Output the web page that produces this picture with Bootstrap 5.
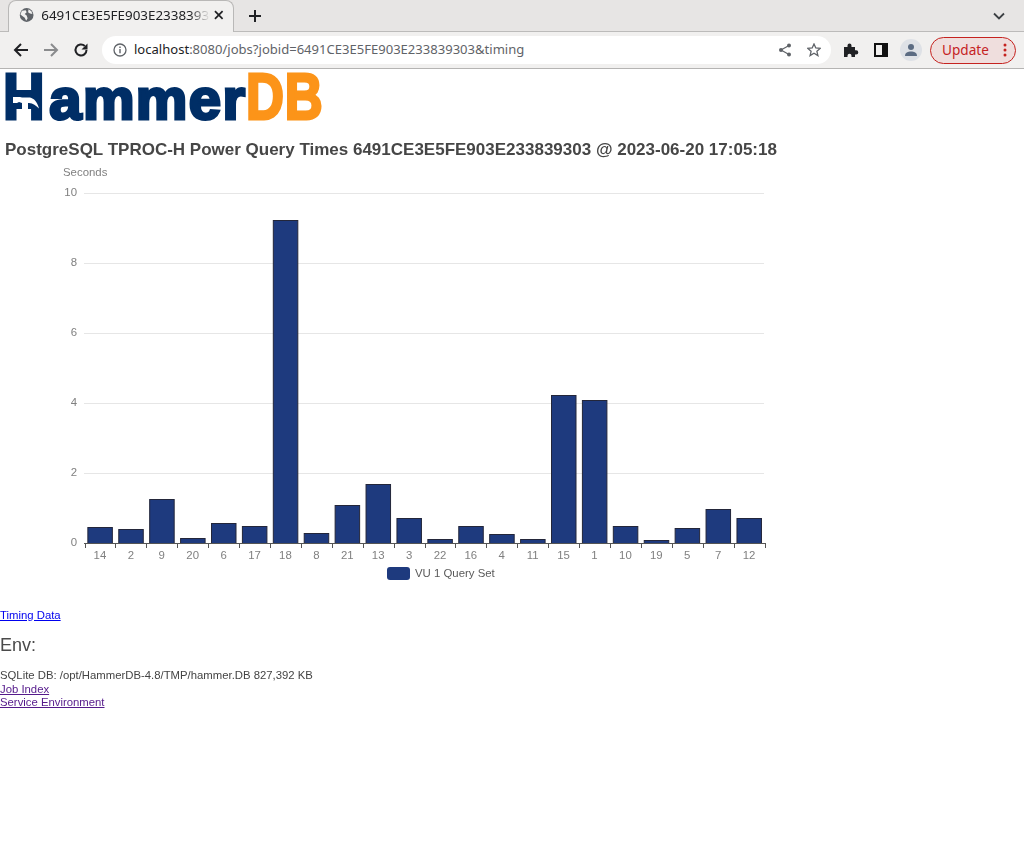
<!DOCTYPE html>
<html lang="en">
<head>
<meta charset="utf-8">
<title>HammerDB Timing</title>
<link href="https://cdn.jsdelivr.net/npm/bootstrap@5.3.0/dist/css/bootstrap.min.css" rel="stylesheet">
<style>
html,body{background:#fff;}
body{margin:0;font-family:"Liberation Sans",Arial,sans-serif;font-size:11.34px;line-height:13.4px;color:#444;height:861px;overflow:hidden;}
main{opacity:.995;}
.ui-font{font-family:"Noto Sans","Open Sans",sans-serif;}
.tabstrip{height:32px;background:#e7e5e4;border-bottom:1px solid #bcbbba;}
.tabcell{width:226px;height:32px;margin-left:8px;margin-bottom:-1px;background:#f1f0ef;border:1px solid #b9b8b7;border-bottom:0;border-radius:8px 8px 0 0;padding:0 9px 3px 10px;}
.tabtitle{font-size:13.4px;line-height:18px;color:#202124;width:177px;white-space:nowrap;overflow:hidden;margin-left:7px;-webkit-mask-image:linear-gradient(90deg,#000 88%,transparent);mask-image:linear-gradient(90deg,#000 88%,transparent);}
.toolbar{height:37px;background:#f1f0ef;border-bottom:1px solid #b5b4b3;}
.omnibox{width:729px;height:28px;background:#fff;border-radius:14px;margin-left:13px;padding:0 10px 0 11px;font-size:13.05px;color:#5f6368;white-space:nowrap;}
.omnibox b{font-weight:400;color:#202124;}
.avatar{width:22px;height:22px;border-radius:50%;background:#dee1e6;}
.updatebtn{width:86px;height:27px;border:1px solid #c5221f;border-radius:14px;background:#efdedd;color:#c5221f;font-size:13.6px;padding:0 8px 0 11px;}
.logo-wrap{height:56px;padding:4px 0 0 6px;}
.logo{display:flex;align-items:baseline;position:relative;width:316px;height:48px;font-weight:700;line-height:48px;}
.logo span{display:block;transform-origin:0 100%;white-space:nowrap;-webkit-text-stroke:3px currentColor;}
.lg-h{color:#002e66;font-size:64px;flex:0 0 39px;margin-left:-3px;transform:scaleX(.9);}
.lg-rest{color:#002e66;font-size:58px;flex:0 0 199px;letter-spacing:1.400px;}
.lg-db{color:#fc9419;font-size:64px;flex:0 0 77px;margin-left:-2px;transform:scaleX(.82);letter-spacing:1px;}
.logo svg{position:absolute;left:0;top:0;}
.page-title{font-size:17px;font-weight:700;color:#464646;margin:0 0 0 5px;line-height:21px;padding-top:14px;white-space:nowrap;}
.chart{display:block;width:770px;height:430px;}
.chart text{font-family:"Liberation Sans",Arial,sans-serif;font-size:11.4px;fill:#808080;}
.chart text.lgd{fill:#5a5a5a;}
.lnks{margin-top:19px;}
.lnks a{color:#00e;}
.lnks a.seen{color:#551a8b;}
.env-head{font-size:18px;font-weight:400;color:#4a4a4a;margin:13px 0 13px;line-height:21px;}
</style>
</head>
<body>
<div class="tabstrip d-flex align-items-end ui-font">
  <div class="tabcell d-flex align-items-center">
    <svg width="16" height="16" viewBox="0 0 16 16"><circle cx="8" cy="8" r="7.200" fill="#5f6368"/><path d="M3 3.500 7 3l1 2-2 2 2 1.500 1 3L7.500 14 6 11 3.500 9 1.500 7.500zM10 2l3 2 1 3-2.500-.5L9.500 5z" fill="#f1f0ef"/></svg>
    <div class="tabtitle">6491CE3E5FE903E233839303</div>
    <svg class="ms-1" width="10" height="10" viewBox="0 0 10 10"><path d="M1 1l8 8M9 1L1 9" stroke="#202124" stroke-width="1.800"/></svg>
  </div>
  <svg style="margin:0 0 9px 15px" width="12" height="12" viewBox="0 0 12 12"><path d="M6 0v12M0 6h12" stroke="#202124" stroke-width="2"/></svg>
  <svg class="ms-auto" style="margin:0 19px 11px 0" width="12" height="8" viewBox="0 0 12 8"><path d="M1 1.500l5 5 5-5" fill="none" stroke="#3c4043" stroke-width="1.800"/></svg>
</div>
<div class="toolbar d-flex align-items-center ui-font">
  <svg style="margin-left:13px" width="16" height="16" viewBox="0 0 16 16"><path d="M15 8H2M8 2 2 8l6 6" fill="none" stroke="#202124" stroke-width="2"/></svg>
  <svg style="margin-left:14px" width="16" height="16" viewBox="0 0 16 16"><path d="M1 8h13M8 2l6 6-6 6" fill="none" stroke="#8a8b8d" stroke-width="2"/></svg>
  <svg style="margin-left:14px" width="16" height="16" viewBox="0 0 16 16"><path d="M13.500 8A5.500 5.500 0 1 1 11.800 4" fill="none" stroke="#202124" stroke-width="2"/><path d="M14.500 1.500v6h-6z" fill="#202124"/></svg>
  <div class="omnibox d-flex align-items-center">
    <svg width="14" height="14" viewBox="0 0 14 14"><circle cx="7" cy="7" r="6" fill="none" stroke="#5f6368" stroke-width="1.300"/><path d="M7 6v4.200M7 3.400v1.500" stroke="#5f6368" stroke-width="1.400"/></svg>
    <span style="margin-left:7px"><b>localhost</b>:8080/jobs?jobid=6491CE3E5FE903E233839303&amp;timing</span>
    <svg class="ms-auto" width="14" height="14" viewBox="0 0 14 14"><circle cx="11" cy="2.500" r="2" fill="#5f6368"/><circle cx="11" cy="11.500" r="2" fill="#5f6368"/><circle cx="3" cy="7" r="2" fill="#5f6368"/><path d="M11 2.500 3 7l8 4.500" fill="none" stroke="#5f6368" stroke-width="1.200"/></svg>
    <svg style="margin-left:15px" width="14" height="14" viewBox="0 0 14 14"><path d="M7 1l1.800 4 4.400.4-3.300 2.900 1 4.300L7 10.300 3.100 12.600l1-4.300L.8 5.400 5.200 5z" fill="none" stroke="#5f6368" stroke-width="1.300"/></svg>
  </div>
  <svg style="margin-left:12px" width="16" height="16" viewBox="0 0 16 16"><path d="M1 5h3.500V3.500a2 2 0 0 1 4 0V5H12v3.300h1.200a2.100 2.100 0 0 1 0 4.200H12V15H8.500v-1.300a2 2 0 0 0-4 0V15H1z" fill="#202124"/></svg>
  <svg style="margin-left:15px" width="14" height="14" viewBox="0 0 14 14"><path d="M1 1h12v12H1z" fill="none" stroke="#111" stroke-width="2"/><path d="M8 1h5v12H8z" fill="#111"/></svg>
  <div class="avatar d-flex align-items-center justify-content-center" style="margin-left:12px"><svg width="14" height="14" viewBox="0 0 14 14"><circle cx="7" cy="4" r="3" fill="#5b6b82"/><path d="M1 13c0-3.500 3-4.500 6-4.500s6 1 6 4.500z" fill="#5b6b82"/></svg></div>
  <div class="updatebtn d-flex align-items-center justify-content-between" style="margin-left:8px">
    <span>Update</span>
    <svg width="4" height="14" viewBox="0 0 4 14"><circle cx="2" cy="2" r="1.500" fill="#c5221f"/><circle cx="2" cy="7" r="1.500" fill="#c5221f"/><circle cx="2" cy="12" r="1.500" fill="#c5221f"/></svg>
  </div>
</div>
<main>
  <div class="logo-wrap">
    <div class="logo" aria-label="HammerDB">
      <span class="lg-h">H</span><span class="lg-rest">ammer</span><span class="lg-db">DB</span>
      <svg width="40" height="48" viewBox="0 0 40 48"><path d="M8 17h22v19H8z" fill="#002e66"/><path d="M7 24h7l2 .5h8c4 1 7 4 9 11-3-3-6-5.500-10-5.500h-1v18h-6V30l-3-1-2 1H7z" fill="#fff"/></svg>
    </div>
  </div>
  <h1 class="page-title">PostgreSQL TPROC-H Power Query Times 6491CE3E5FE903E233839303 @ 2023-06-20 17:05:18</h1>
  <svg class="chart" id="chart" viewBox="0 160 770 430" role="img" aria-label="Bar chart of query times"></svg>
  <div class="lnks">
    <a href="#">Timing Data</a>
    <h2 class="env-head">Env:</h2>
    <div>SQLite DB: /opt/HammerDB-4.8/TMP/hammer.DB 827,392 KB</div>
    <div><a class="seen" href="#">Job Index</a></div>
    <div><a class="seen" href="#">Service Environment</a></div>
  </div>
</main>
<script src="https://cdn.jsdelivr.net/npm/bootstrap@5.3.0/dist/js/bootstrap.bundle.min.js"></script>
<script>
(function(){
  var d=[["14",.46],["2",.41],["9",1.26],["20",.15],["6",.56],["17",.48],["18",9.23],["8",.28],["21",1.09],["13",1.69],["3",.72],["22",.12],["16",.49],["4",.27],["11",.12],["15",4.23],["1",4.08],["10",.49],["19",.09],["5",.43],["7",.97],["12",.72]];
  var x0=84.5,st=30.91,y0=543.5,u=35,s='';
  s+='<text x="63" y="175.500">Seconds</text>';
  for(var v=0;v<=10;v+=2){var y=y0-v*u;
    if(v>0)s+='<line x1="84" x2="764" y1="'+y+'" y2="'+y+'" stroke="#e6e6e6"/>';
    s+='<text x="77" y="'+(y+2)+'" text-anchor="end">'+v+'</text>';}
  d.forEach(function(r,i){var cx=x0+st*(i+.5),h=Math.round(r[1]*u);
    s+='<rect x="'+(cx-12.1).toFixed(2)+'" y="'+(y0-h)+'" width="24.500" height="'+h+'" fill="#1e3a7e" stroke="#23263a" stroke-width="1"/>';
    s+='<text x="'+cx+'" y="559" text-anchor="middle">'+r[0]+'</text>';});
  s+='<line x1="84" x2="765" y1="'+y0+'" y2="'+y0+'" stroke="#555"/>';
  for(var i=0;i<=22;i++){var tx=Math.round(x0+st*i)+.5;s+='<line x1="'+tx+'" x2="'+tx+'" y1="543" y2="548" stroke="#555"/>';}
  s+='<rect x="387" y="567" width="23" height="13" rx="3" fill="#1e3a7e"/>';
  s+='<text class="lgd" x="415" y="577">VU 1 Query Set</text>';
  document.getElementById('chart').innerHTML=s;
})();
</script>
</body>
</html>
